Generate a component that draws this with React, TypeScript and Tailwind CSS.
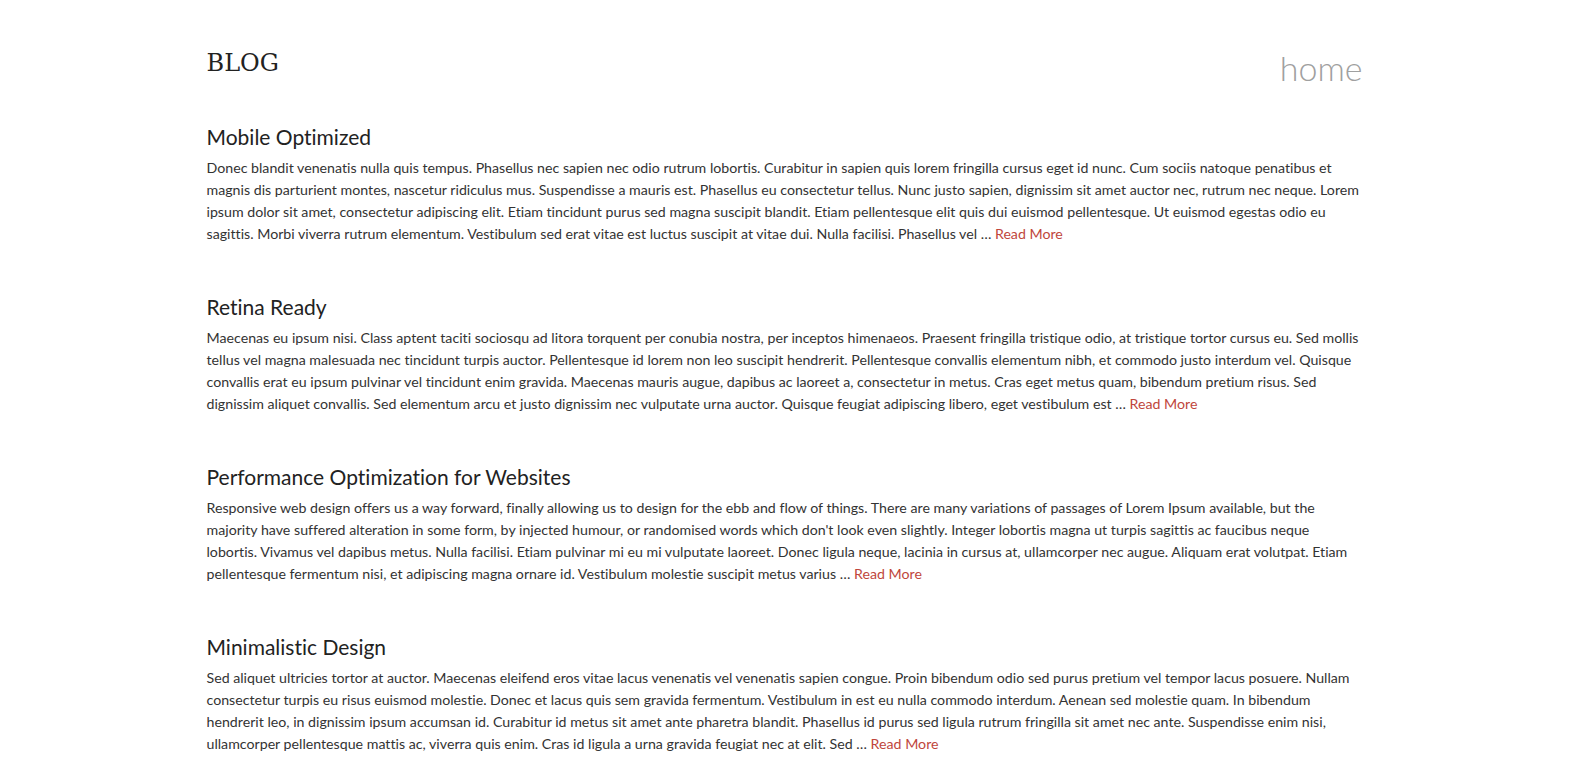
import React from "react";

const posts = [
  {
    title: "Mobile Optimized",
    body: "Donec blandit venenatis nulla quis tempus. Phasellus nec sapien nec odio rutrum lobortis. Curabitur in sapien quis lorem fringilla cursus eget id nunc. Cum sociis natoque penatibus et magnis dis parturient montes, nascetur ridiculus mus. Suspendisse a mauris est. Phasellus eu consectetur tellus. Nunc justo sapien, dignissim sit amet auctor nec, rutrum nec neque. Lorem ipsum dolor sit amet, consectetur adipiscing elit. Etiam tincidunt purus sed magna suscipit blandit. Etiam pellentesque elit quis dui euismod pellentesque. Ut euismod egestas odio eu sagittis. Morbi viverra rutrum elementum. Vestibulum sed erat vitae est luctus suscipit at vitae dui. Nulla facilisi. Phasellus vel …",
  },
  {
    title: "Retina Ready",
    body: "Maecenas eu ipsum nisi. Class aptent taciti sociosqu ad litora torquent per conubia nostra, per inceptos himenaeos. Praesent fringilla tristique odio, at tristique tortor cursus eu. Sed mollis tellus vel magna malesuada nec tincidunt turpis auctor. Pellentesque id lorem non leo suscipit hendrerit. Pellentesque convallis elementum nibh, et commodo justo interdum vel. Quisque convallis erat eu ipsum pulvinar vel tincidunt enim gravida. Maecenas mauris augue, dapibus ac laoreet a, consectetur in metus. Cras eget metus quam, bibendum pretium risus. Sed dignissim aliquet convallis. Sed elementum arcu et justo dignissim nec vulputate urna auctor. Quisque feugiat adipiscing libero, eget vestibulum est …",
  },
  {
    title: "Performance Optimization for Websites",
    body: "Responsive web design offers us a way forward, finally allowing us to design for the ebb and flow of things. There are many variations of passages of Lorem Ipsum available, but the majority have suffered alteration in some form, by injected humour, or randomised words which don't look even slightly. Integer lobortis magna ut turpis sagittis ac faucibus neque lobortis. Vivamus vel dapibus metus. Nulla facilisi. Etiam pulvinar mi eu mi vulputate laoreet. Donec ligula neque, lacinia in cursus at, ullamcorper nec augue. Aliquam erat volutpat. Etiam pellentesque fermentum nisi, et adipiscing magna ornare id. Vestibulum molestie suscipit metus varius …",
  },
  {
    title: "Minimalistic Design",
    body: "Sed aliquet ultricies tortor at auctor. Maecenas eleifend eros vitae lacus venenatis vel venenatis sapien congue. Proin bibendum odio sed purus pretium vel tempor lacus posuere. Nullam consectetur turpis eu risus euismod molestie. Donec et lacus quis sem gravida fermentum. Vestibulum in est eu nulla commodo interdum. Aenean sed molestie quam. In bibendum hendrerit leo, in dignissim ipsum accumsan id. Curabitur id metus sit amet ante pharetra blandit. Phasellus id purus sed ligula rutrum fringilla sit amet nec ante. Suspendisse enim nisi, ullamcorper pellentesque mattis ac, viverra quis enim. Cras id ligula a urna gravida feugiat nec at elit. Sed …",
  },
];

export default function App() {
  return (
    <div className="min-h-[782px] bg-white font-['Lato','Open_Sans',sans-serif] text-[#333] [font-variant-ligatures:none]">
      <div className="mx-auto w-[1170px] pt-[46px]">
        <header className="flex items-start justify-between">
          <h1 className="font-['DejaVu_Serif',serif] text-[24px] leading-[34px] text-[#222]">
            BLOG
          </h1>
          <a className="mr-[14px] font-['Lato',sans-serif] text-[34px] font-light leading-[44px] text-[#a0a0a0]">
            home
          </a>
        </header>
        <main className="mt-[33px] flex w-[1156px] flex-col gap-[48px]">
          {posts.map((p) => (
            <article key={p.title}>
              <h2 className="text-[21px] leading-[28px] text-[#222]">{p.title}</h2>
              <p className="mt-[6px] text-[14.2px] leading-[22px] text-[#333]">
                {p.body} <a className="text-[#c0463c]">Read More</a>
              </p>
            </article>
          ))}
        </main>
      </div>
    </div>
  );
}
